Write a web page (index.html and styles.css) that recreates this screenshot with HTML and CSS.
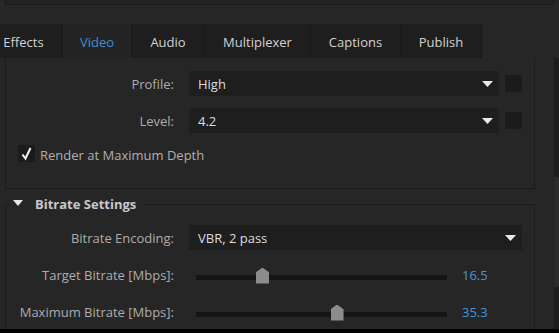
FILE: index.html
```html
<!DOCTYPE html>
<html lang="en">

<head>
    <meta charset="UTF-8">
    <meta name="viewport" content="width=device-width, initial-scale=1.0">
    <title>Export Settings - Video</title>
    <link rel="stylesheet" href="styles.css">
</head>

<body>
    <div id="app">
        <div class="top-strip"></div>

        <div class="tabs">
            <div class="tab">Effects</div>
            <div class="tab tab-active">Video</div>
            <div class="tab">Audio</div>
            <div class="tab">Multiplexer</div>
            <div class="tab">Captions</div>
            <div class="tab">Publish</div>
        </div>

        <div class="view">
            <div class="pane">
                <div class="group group-cut">
                    <div class="row">
                        <span class="label">Profile:</span>
                        <div class="control">
                            <div class="select">High<svg class="drop" width="11" height="6" viewBox="0 0 11 6"><path d="M0 0H11L5.5 6Z"/></svg></div>
                            <span class="box"></span>
                        </div>
                    </div>
                    <div class="row">
                        <span class="label">Level:</span>
                        <div class="control">
                            <div class="select">4.2<svg class="drop" width="11" height="6" viewBox="0 0 11 6"><path d="M0 0H11L5.5 6Z"/></svg></div>
                            <span class="box"></span>
                        </div>
                    </div>
                    <div class="check">
                        <span class="box"><svg width="17" height="17" viewBox="0 0 17 17"><path d="M4.5 9.5L7.5 13.5L12.5 3" fill="none" stroke="#f2f2f2" stroke-width="2"/></svg></span>
                        <span class="check-text">Render at Maximum Depth</span>
                    </div>
                </div>

                <fieldset class="group">
                    <legend class="group-title"><svg class="twisty" width="10" height="6" viewBox="0 0 10 6"><path d="M0 0H10L5 6Z"/></svg>Bitrate Settings</legend>
                    <div class="row">
                        <span class="label">Bitrate Encoding:</span>
                        <div class="control">
                            <div class="select">VBR, 2 pass<svg class="drop" width="11" height="6" viewBox="0 0 11 6"><path d="M0 0H11L5.5 6Z"/></svg></div>
                        </div>
                    </div>
                    <div class="row">
                        <span class="label">Target Bitrate [Mbps]:</span>
                        <div class="slider">
                            <div class="track"><span class="thumb" style="left: 26.3%"></span></div>
                            <span class="value">16.5</span>
                        </div>
                    </div>
                    <div class="row">
                        <span class="label">Maximum Bitrate [Mbps]:</span>
                        <div class="slider">
                            <div class="track"><span class="thumb" style="left: 56%"></span></div>
                            <span class="value">35.3</span>
                        </div>
                    </div>
                </fieldset>
            </div>
            <div class="scrollbar"><div class="scroll-thumb"></div></div>
        </div>
    </div>
</body>

</html>
```

FILE: styles.css
```css
    html, body {
        margin: 0;
        background-color: #000;
    }
    body {
        font: 13px/18px "Open Sans", "Liberation Sans", Arial, sans-serif;
        color: #b4b4b4;
        -webkit-user-select: none;
        user-select: none;
    }

    #app {
        height: 329px;
        background-color: #262626;
        overflow: hidden;
    }

    .top-strip {
        height: 4px;
        margin: 0 5px 0 5px;
        background-color: #222;
        border: 1px solid #1b1b1b;
        border-top: none;
    }

    /* tab strip, fixed width tabs */
    .tabs {
        display: grid;
        grid-template-columns: 78px 69px 73px 106px 90px 81px;
        height: 34px;
        margin: 19px 0 0 -15px;
    }
    .tab {
        padding-top: 3px;
        line-height: 31px;
        text-align: center;
        color: #d2d2d2;
        background-color: #1e1e1e;
        border-right: 1px solid #1a1a1a;
        white-space: nowrap;
    }
    .tab-active {
        color: #3c8fd2;
        background-color: #242424;
    }

    /* scrolling area */
    .view {
        display: flex;
        height: 271px;
        overflow: hidden;
    }
    .pane {
        flex: 1;
        padding: 0 19px 0 5px;
    }
    .scrollbar {
        width: 5px;
        background-color: #1c1c1c;
    }
    .scroll-thumb {
        height: 110px;
        margin-top: 119px;
        background-color: #2c2c2c;
    }

    .group {
        display: flex;
        flex-direction: column;
        gap: 12px;
        margin: 0;
        padding: 12px 12px 20px 0;
        border: 1px solid #1b1b1b;
        min-width: 0;
    }
    .group-cut {
        border-top: none;
        padding: 13px 12px 26px 0;
    }
    fieldset.group {
        margin-top: 6px;
    }
    .group-title {
        display: flex;
        align-items: center;
        margin-left: 5px;
        padding: 0 8px 0 2px;
        font-weight: 700;
        color: #c8c8c8;
    }
    .twisty {
        fill: #e6e6e6;
        margin: 0 12px 3px 0;
    }

    .row {
        display: grid;
        grid-template-columns: 168px 1fr;
        column-gap: 15px;
        align-items: center;
        height: 25px;
    }
    .label {
        text-align: right;
        color: #adadad;
        white-space: nowrap;
    }
    .control {
        display: flex;
        align-items: center;
        gap: 6px;
    }

    .select {
        flex: 1;
        display: flex;
        align-items: center;
        justify-content: space-between;
        height: 25px;
        padding: 0 6px 0 9px;
        background-color: #1e1e1e;
        color: #dcdcdc;
    }
    .drop {
        fill: #e8e8e8;
    }

    .box {
        display: block;
        width: 17px;
        height: 17px;
        background-color: #1b1b1b;
    }

    .check {
        display: flex;
        align-items: center;
        gap: 5px;
        padding-left: 12px;
        height: 17px;
        color: #b0b0b0;
    }
    .check-text {
        margin-top: 3px;
    }

    /* sliders */
    .slider {
        display: flex;
        align-items: center;
        gap: 15px;
        padding-left: 7px;
    }
    .track {
        position: relative;
        width: 251px;
        height: 5px;
        margin-top: 5px;
        background-color: #151515;
    }
    .thumb {
        position: absolute;
        bottom: -4px;
        width: 13px;
        height: 16px;
        margin-left: -6px;
        background-color: #8c8c8c;
        clip-path: polygon(0 30%, 50% 0, 100% 30%, 100% 100%, 0 100%);
    }
    .value {
        color: #4594d4;
    }
```
